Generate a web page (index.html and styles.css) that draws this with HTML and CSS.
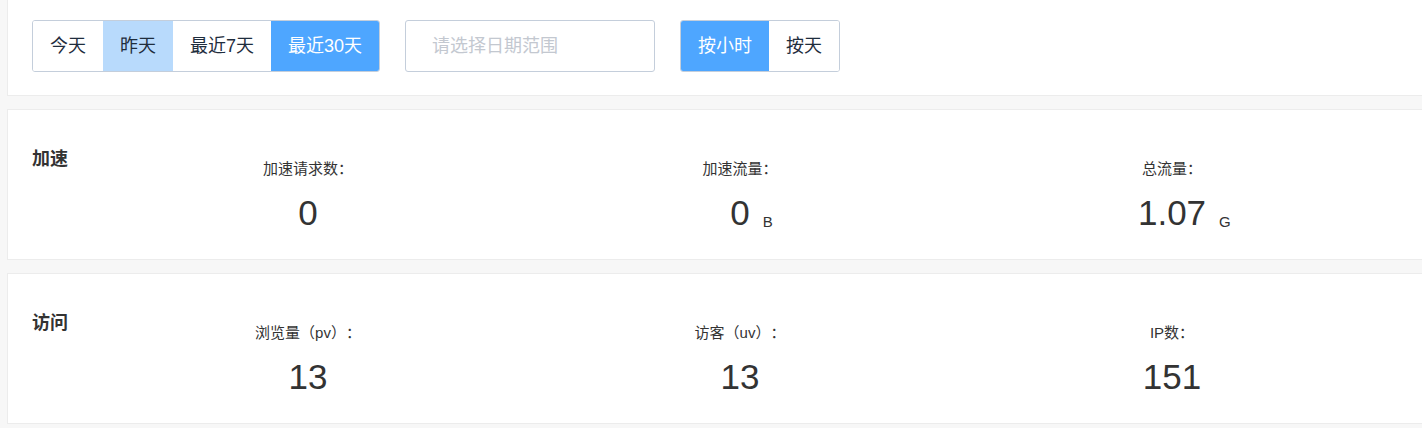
FILE: index.html
```html
<!DOCTYPE html>
<html lang="zh-CN">
<head>
<meta charset="utf-8">
<title>统计</title>
<link rel="stylesheet" href="styles.css">
</head>
<body>
<div class="page">
  <section class="card toolbar">
    <div class="btn-group">
      <button class="btn">今天</button>
      <button class="btn btn-light">昨天</button>
      <button class="btn">最近7天</button>
      <button class="btn btn-primary">最近30天</button>
    </div>
    <div class="date-input">请选择日期范围</div>
    <div class="btn-group">
      <button class="btn btn-primary">按小时</button>
      <button class="btn">按天</button>
    </div>
  </section>

  <section class="card stats">
    <h3 class="stats-title">加速</h3>
    <div class="stat">
      <div class="stat-label">加速请求数：</div>
      <div class="stat-value"><span class="num">0</span></div>
    </div>
    <div class="stat">
      <div class="stat-label">加速流量：</div>
      <div class="stat-value"><span class="num">0<span class="unit">B</span></span></div>
    </div>
    <div class="stat">
      <div class="stat-label">总流量：</div>
      <div class="stat-value"><span class="num">1.07<span class="unit">G</span></span></div>
    </div>
  </section>

  <section class="card stats">
    <h3 class="stats-title">访问</h3>
    <div class="stat">
      <div class="stat-label stat-label-wide">浏览量（pv）：</div>
      <div class="stat-value"><span class="num">13</span></div>
    </div>
    <div class="stat">
      <div class="stat-label stat-label-wide">访客（uv）：</div>
      <div class="stat-value"><span class="num">13</span></div>
    </div>
    <div class="stat">
      <div class="stat-label">IP数：</div>
      <div class="stat-value"><span class="num">151</span></div>
    </div>
  </section>
</div>
</body>
</html>
```

FILE: styles.css
```css
html, body {
  margin: 0;
  padding: 0;
  background: #f7f7f7;
  overflow: hidden;
}

body {
  font-family: "Liberation Sans", Arial, "Noto Sans CJK SC", sans-serif;
  color: #333;
}

.page {
  padding-left: 7px;
}

.card {
  background: #fff;
  border: 1px solid #ececec;
  border-right: 0;
  margin-bottom: 13px;
}

.toolbar {
  border-top: 0;
  display: flex;
  align-items: flex-start;
  gap: 25px;
  padding: 20px 0 23px 24px;
}

.btn-group {
  display: flex;
  border: 1px solid #c4cedb;
  border-radius: 3px;
  overflow: hidden;
}

.btn {
  height: 50px;
  padding: 0 17px;
  border: 0;
  margin: 0;
  background: #fff;
  color: #1f2d3d;
  font-family: inherit;
  font-size: 18px;
  line-height: 50px;
  cursor: pointer;
}

.btn-light {
  background: #b8dafc;
}

.btn-primary {
  background: #4ea6ff;
  color: #fff;
}

.date-input {
  width: 222px;
  height: 50px;
  padding-left: 26px;
  border: 1px solid #c4cedb;
  border-radius: 3px;
  color: #c3c8d0;
  font-size: 18px;
  line-height: 50px;
}

.stats {
  display: grid;
  grid-template-columns: 60px repeat(3, 432px);
  align-items: start;
  padding: 37px 0 26px 24px;
}

.stats-title {
  margin: 0;
  font-size: 18px;
  line-height: 24px;
  font-weight: bold;
  color: #333;
}

.stat {
  padding-top: 12px;
  text-align: center;
}

.stat-label {
  font-size: 15px;
  line-height: 20px;
  color: #333;
  text-spacing-trim: space-all;
}

.stat-label-wide {
  font-family: "Liberation Sans", Arial, "Noto Sans CJK TC", sans-serif;
}

.stat-value {
  margin-top: 14px;
  font-size: 35px;
  line-height: 40px;
  color: #333;
}

.num {
  position: relative;
  display: inline-block;
}

.unit {
  position: absolute;
  left: 100%;
  bottom: 4px;
  margin-left: 13px;
  font-size: 15px;
  line-height: 1;
}
```
